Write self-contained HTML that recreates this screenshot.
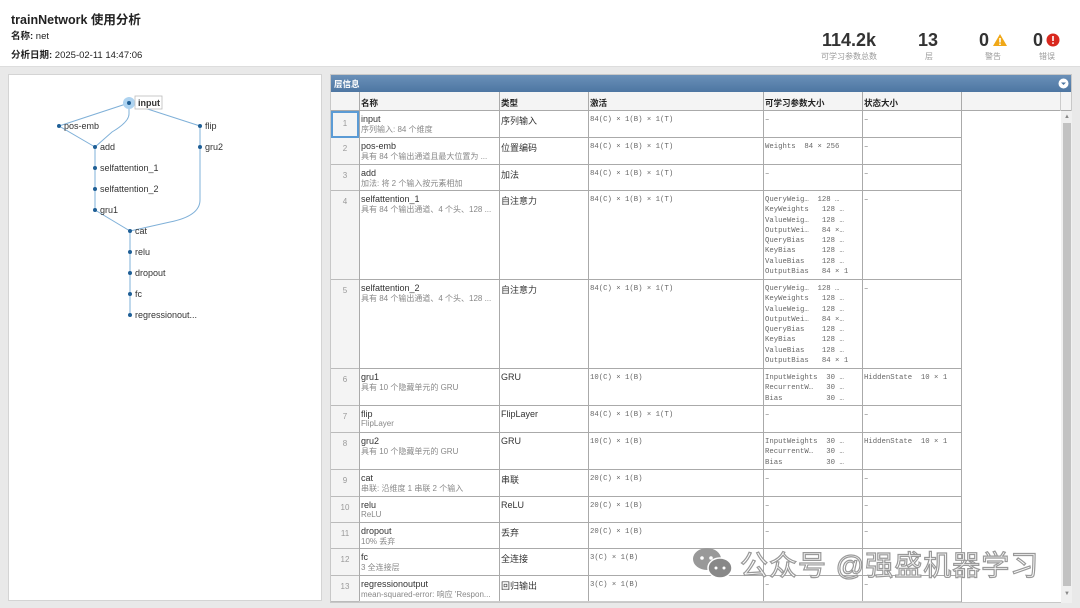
<!DOCTYPE html>
<html><head><meta charset="utf-8"><style>
*{margin:0;padding:0;box-sizing:border-box}
body{width:1080px;height:608px;background:#e9e9e9;font-family:"Liberation Sans","Noto Sans CJK SC",sans-serif;position:relative;overflow:hidden;color:#333}
.a{position:absolute;white-space:nowrap}
#hdr{position:absolute;left:0;top:0;width:1080px;height:67px;background:#fff;border-bottom:1px solid #ddd}
#left{position:absolute;left:8px;top:74px;width:314px;height:527px;background:#fff;border:1px solid #d4d4d4}
#right{position:absolute;left:330px;top:74px;width:742px;height:529px;background:#fff;border:1px solid #c8c8c8}
.t{font-size:9px;color:#333}
.g{font-size:8px;color:#888}
.m{font-family:"Liberation Mono","Noto Sans CJK SC",monospace;font-size:7.3px;color:#666;line-height:10.3px;white-space:pre}
.vl{position:absolute;width:1px;background:#aaa}
.hl{position:absolute;height:1px;background:#aaa;left:28px;width:602px}
.idx{position:absolute;left:0;width:28px;background:#f4f4f4;border-bottom:1px solid #bbb;font-size:8px;color:#999;text-align:center;padding-top:6px}
</style></head><body>
<div id="hdr">
<div class="a" style="left:11px;top:9px;font-size:12.5px;font-weight:bold;color:#222">trainNetwork 使用分析</div>
<div class="a" style="left:11px;top:28px;font-size:9.5px;color:#222"><b>名称:</b> net</div>
<div class="a" style="left:11px;top:47px;font-size:9.5px;color:#222"><b>分析日期:</b> 2025-02-11 14:47:06</div>
<div class="a" style="left:822px;top:30px;font-size:18px;font-weight:bold;color:#333">114.2k</div>
<div class="a" style="left:821px;top:51px;font-size:8px;color:#999">可学习参数总数</div>
<div class="a" style="left:918px;top:30px;font-size:18px;font-weight:bold;color:#333">13</div>
<div class="a" style="left:925px;top:51px;font-size:8px;color:#999">层</div>
<div class="a" style="left:979px;top:30px;font-size:18px;font-weight:bold;color:#333">0</div>
<svg class="a" style="left:992px;top:33px" width="16" height="14"><path d="M8 1L15 13H1Z" fill="#f0a818"/><rect x="7.2" y="5" width="1.6" height="4.5" fill="#fff"/><rect x="7.2" y="10.5" width="1.6" height="1.5" fill="#fff"/></svg>
<div class="a" style="left:985px;top:51px;font-size:8px;color:#999">警告</div>
<div class="a" style="left:1033px;top:30px;font-size:18px;font-weight:bold;color:#333">0</div>
<svg class="a" style="left:1046px;top:33px" width="14" height="14"><circle cx="7" cy="7" r="6.5" fill="#d9281e"/><rect x="6.2" y="3" width="1.6" height="5" fill="#fff"/><rect x="6.2" y="9.3" width="1.6" height="1.6" fill="#fff"/></svg>
<div class="a" style="left:1039px;top:51px;font-size:8px;color:#999">错误</div>
</div>

<div id="left"></div>
<svg class="a" style="left:0;top:0" width="330" height="608">
<g stroke="#7fb0d8" stroke-width="1" fill="none">
<path d="M129 103L59 126"/><path d="M129 103L200 126"/>
<path d="M129 103V114Q129 122 112 132L95 147"/>
<path d="M59 126L95 147"/>
<path d="M95 147V210"/>
<path d="M200 126V147"/>
<path d="M200 147V200Q200 216 170 222L130 231"/>
<path d="M95 210L130 231"/>
<path d="M130 231V315"/>
</g>
<circle cx="129" cy="103" r="6" fill="#aed3f0"/>
<g fill="#1f5f96">
<circle cx="129" cy="103" r="2"/><circle cx="59" cy="126" r="2"/><circle cx="200" cy="126" r="2"/>
<circle cx="95" cy="147" r="2"/><circle cx="200" cy="147" r="2"/><circle cx="95" cy="168" r="2"/>
<circle cx="95" cy="189" r="2"/><circle cx="95" cy="210" r="2"/><circle cx="130" cy="231" r="2"/>
<circle cx="130" cy="252" r="2"/><circle cx="130" cy="273" r="2"/><circle cx="130" cy="294" r="2"/><circle cx="130" cy="315" r="2"/>
</g>
<rect x="135" y="96" width="27" height="13" fill="#fff" stroke="#bbb" stroke-width="0.8"/>
<g font-family="Liberation Sans,sans-serif" font-size="9" fill="#333">
<text x="138" y="106" font-weight="bold">input</text>
<text x="64" y="129">pos-emb</text><text x="205" y="129">flip</text>
<text x="100" y="150">add</text><text x="205" y="150">gru2</text>
<text x="100" y="171">selfattention_1</text><text x="100" y="192">selfattention_2</text>
<text x="100" y="213">gru1</text><text x="135" y="234">cat</text><text x="135" y="255">relu</text>
<text x="135" y="276">dropout</text><text x="135" y="297">fc</text><text x="135" y="318">regressionout...</text>
</g>
</svg>

<div id="right">
<div class="a" style="left:0;top:0;width:740px;height:17px;background:linear-gradient(#6a90b8,#4d76a2)"></div>
<div class="a" style="left:3px;top:3px;font-size:8.5px;font-weight:bold;color:#fff">层信息</div>
<svg class="a" style="left:727px;top:3px" width="11" height="11"><circle cx="5.5" cy="5.5" r="5" fill="#fff"/><path d="M3 4.5L5.5 7L8 4.5Z" fill="#4d76a2"/></svg>
<div class="a" style="left:0;top:17px;width:740px;height:19px;background:#f4f4f4;border-bottom:1px solid #aaa"></div>
<div class="a" style="left:30px;top:22px;font-size:8.5px;font-weight:bold;color:#222">名称</div>
<div class="a" style="left:170px;top:22px;font-size:8.5px;font-weight:bold;color:#222">类型</div>
<div class="a" style="left:259px;top:22px;font-size:8.5px;font-weight:bold;color:#222">激活</div>
<div class="a" style="left:434px;top:22px;font-size:8.5px;font-weight:bold;color:#222">可学习参数大小</div>
<div class="a" style="left:533px;top:22px;font-size:8.5px;font-weight:bold;color:#222">状态大小</div>
<div class="vl" style="left:28px;top:17px;height:510px"></div>
<div class="vl" style="left:168px;top:17px;height:510px"></div>
<div class="vl" style="left:257px;top:17px;height:510px"></div>
<div class="vl" style="left:432px;top:17px;height:510px"></div>
<div class="vl" style="left:531px;top:17px;height:510px"></div>
<div class="vl" style="left:630px;top:17px;height:510px"></div>
<div class="vl" style="left:729px;top:17px;height:19px;background:#ccc"></div>
<div class="a" style="left:730px;top:36px;width:11px;height:492px;background:#f0f0f0"></div>
<div class="a" style="left:732px;top:48px;width:8px;height:463px;background:#c2c2c2"></div>
<div class="a" style="left:733px;top:39px;font-size:6px;color:#888">▲</div>
<div class="a" style="left:733px;top:516px;font-size:6px;color:#888">▼</div>

<div class="idx" style="top:36px;height:27px;border:2px solid #5b9bd5">1</div>
<div class="idx" style="top:63px;height:27px">2</div>
<div class="idx" style="top:90px;height:26px">3</div>
<div class="idx" style="top:116px;height:89px">4</div>
<div class="idx" style="top:205px;height:89px">5</div>
<div class="idx" style="top:294px;height:37px">6</div>
<div class="idx" style="top:331px;height:27px">7</div>
<div class="idx" style="top:358px;height:37px">8</div>
<div class="idx" style="top:395px;height:27px">9</div>
<div class="idx" style="top:422px;height:26px">10</div>
<div class="idx" style="top:448px;height:26px">11</div>
<div class="idx" style="top:474px;height:27px">12</div>
<div class="idx" style="top:501px;height:26px">13</div>
<div class="hl" style="top:62px"></div><div class="hl" style="top:89px"></div><div class="hl" style="top:115px"></div>
<div class="hl" style="top:204px"></div><div class="hl" style="top:293px"></div><div class="hl" style="top:330px"></div>
<div class="hl" style="top:357px"></div><div class="hl" style="top:394px"></div><div class="hl" style="top:421px"></div>
<div class="hl" style="top:447px"></div><div class="hl" style="top:473px"></div><div class="hl" style="top:500px"></div>
<div class="hl" style="top:526px;background:#ccc"></div>

<div class="a t" style="left:30px;top:39px">input</div><div class="a g" style="left:30px;top:49px">序列输入: 84 个维度</div>
<div class="a t" style="left:30px;top:66px">pos-emb</div><div class="a g" style="left:30px;top:76px">具有 84 个输出通道且最大位置为 ...</div>
<div class="a t" style="left:30px;top:93px">add</div><div class="a g" style="left:30px;top:103px">加法: 将 2 个输入按元素相加</div>
<div class="a t" style="left:30px;top:119px">selfattention_1</div><div class="a g" style="left:30px;top:129px">具有 84 个输出通道、4 个头、128 ...</div>
<div class="a t" style="left:30px;top:208px">selfattention_2</div><div class="a g" style="left:30px;top:218px">具有 84 个输出通道、4 个头、128 ...</div>
<div class="a t" style="left:30px;top:297px">gru1</div><div class="a g" style="left:30px;top:307px">具有 10 个隐藏单元的 GRU</div>
<div class="a t" style="left:30px;top:334px">flip</div><div class="a g" style="left:30px;top:344px">FlipLayer</div>
<div class="a t" style="left:30px;top:361px">gru2</div><div class="a g" style="left:30px;top:371px">具有 10 个隐藏单元的 GRU</div>
<div class="a t" style="left:30px;top:398px">cat</div><div class="a g" style="left:30px;top:408px">串联: 沿维度 1 串联 2 个输入</div>
<div class="a t" style="left:30px;top:425px">relu</div><div class="a g" style="left:30px;top:435px">ReLU</div>
<div class="a t" style="left:30px;top:451px">dropout</div><div class="a g" style="left:30px;top:461px">10% 丢弃</div>
<div class="a t" style="left:30px;top:477px">fc</div><div class="a g" style="left:30px;top:487px">3 全连接层</div>
<div class="a t" style="left:30px;top:504px">regressionoutput</div><div class="a g" style="left:30px;top:514px">mean-squared-error: 响应 'Respon...</div>

<div class="a t" style="left:170px;top:39px">序列输入</div><div class="a t" style="left:170px;top:66px">位置编码</div>
<div class="a t" style="left:170px;top:93px">加法</div><div class="a t" style="left:170px;top:119px">自注意力</div>
<div class="a t" style="left:170px;top:208px">自注意力</div><div class="a t" style="left:170px;top:297px">GRU</div>
<div class="a t" style="left:170px;top:334px">FlipLayer</div><div class="a t" style="left:170px;top:361px">GRU</div>
<div class="a t" style="left:170px;top:398px">串联</div><div class="a t" style="left:170px;top:425px">ReLU</div>
<div class="a t" style="left:170px;top:451px">丢弃</div><div class="a t" style="left:170px;top:477px">全连接</div>
<div class="a t" style="left:170px;top:504px">回归输出</div>

<div class="a m" style="left:259px;top:40px">84(C) × 1(B) × 1(T)</div>
<div class="a m" style="left:259px;top:67px">84(C) × 1(B) × 1(T)</div>
<div class="a m" style="left:259px;top:94px">84(C) × 1(B) × 1(T)</div>
<div class="a m" style="left:259px;top:120px">84(C) × 1(B) × 1(T)</div>
<div class="a m" style="left:259px;top:209px">84(C) × 1(B) × 1(T)</div>
<div class="a m" style="left:259px;top:298px">10(C) × 1(B)</div>
<div class="a m" style="left:259px;top:335px">84(C) × 1(B) × 1(T)</div>
<div class="a m" style="left:259px;top:362px">10(C) × 1(B)</div>
<div class="a m" style="left:259px;top:399px">20(C) × 1(B)</div>
<div class="a m" style="left:259px;top:426px">20(C) × 1(B)</div>
<div class="a m" style="left:259px;top:452px">20(C) × 1(B)</div>
<div class="a m" style="left:259px;top:478px">3(C) × 1(B)</div>
<div class="a m" style="left:259px;top:505px">3(C) × 1(B)</div>

<div class="a m" style="left:434px;top:40px">–</div>
<div class="a m" style="left:434px;top:67px">Weights  84 × 256</div>
<div class="a m" style="left:434px;top:94px">–</div>
<div class="a m" style="left:434px;top:120px">QueryWeig…  128 …
KeyWeights   128 …
ValueWeig…   128 …
OutputWei…   84 ×…
QueryBias    128 …
KeyBias      128 …
ValueBias    128 …
OutputBias   84 × 1</div>
<div class="a m" style="left:434px;top:209px">QueryWeig…  128 …
KeyWeights   128 …
ValueWeig…   128 …
OutputWei…   84 ×…
QueryBias    128 …
KeyBias      128 …
ValueBias    128 …
OutputBias   84 × 1</div>
<div class="a m" style="left:434px;top:298px">InputWeights  30 …
RecurrentW…   30 …
Bias          30 …</div>
<div class="a m" style="left:434px;top:335px">–</div>
<div class="a m" style="left:434px;top:362px">InputWeights  30 …
RecurrentW…   30 …
Bias          30 …</div>
<div class="a m" style="left:434px;top:399px">–</div>
<div class="a m" style="left:434px;top:426px">–</div>
<div class="a m" style="left:434px;top:452px">–</div>
<div class="a m" style="left:434px;top:505px">–</div>

<div class="a m" style="left:533px;top:40px">–</div><div class="a m" style="left:533px;top:67px">–</div>
<div class="a m" style="left:533px;top:94px">–</div><div class="a m" style="left:533px;top:120px">–</div>
<div class="a m" style="left:533px;top:209px">–</div><div class="a m" style="left:533px;top:298px">HiddenState  10 × 1</div>
<div class="a m" style="left:533px;top:335px">–</div><div class="a m" style="left:533px;top:362px">HiddenState  10 × 1</div>
<div class="a m" style="left:533px;top:399px">–</div><div class="a m" style="left:533px;top:426px">–</div>
<div class="a m" style="left:533px;top:452px">–</div><div class="a m" style="left:533px;top:505px">–</div>
</div>

<svg class="a" style="left:690px;top:545px" width="46" height="36"><ellipse cx="17" cy="14" rx="14" ry="11" fill="#999"/><ellipse cx="30" cy="23" rx="12" ry="10" fill="#888" stroke="#fff" stroke-width="1.5"/><circle cx="12" cy="13" r="1.8" fill="#fff"/><circle cx="21" cy="13" r="1.8" fill="#fff"/><circle cx="26" cy="23" r="1.5" fill="#fff"/><circle cx="34" cy="23" r="1.5" fill="#fff"/></svg>
<div class="a" style="left:740px;top:544px;font-size:28px;color:#fff;-webkit-text-stroke:1.2px #999;font-family:'Liberation Sans','Noto Sans CJK SC',sans-serif;letter-spacing:1px">公众号 @强盛机器学习</div>
</body></html>
